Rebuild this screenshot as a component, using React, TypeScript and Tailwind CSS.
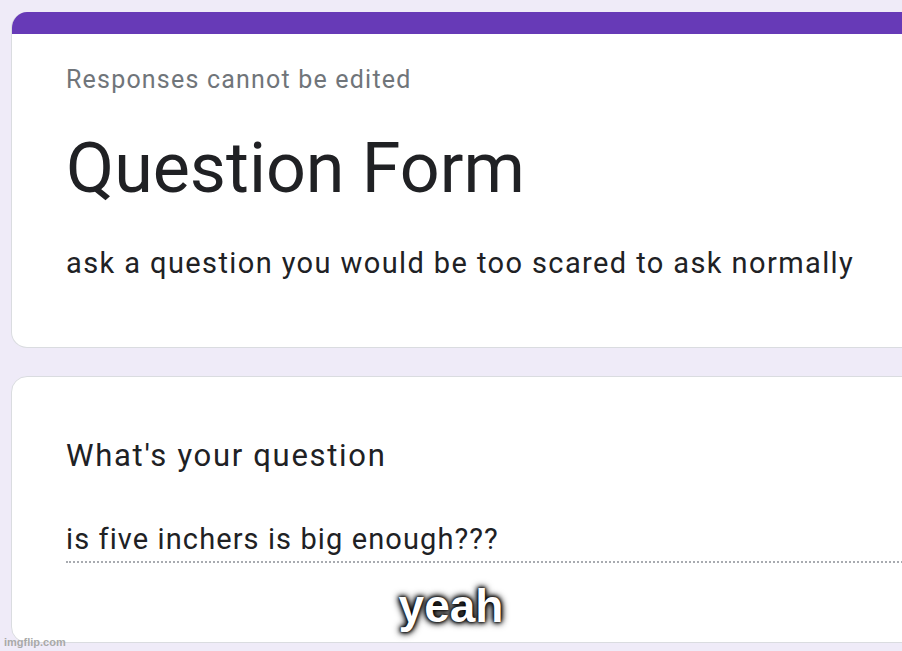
export default function App() {
  return (
    <div className="relative h-[651px] w-[902px] overflow-hidden bg-[#efebf8] font-['Roboto',sans-serif]">
      <div className="flex w-[960px] flex-col gap-[28px] pl-[11px] pt-[12px]">
        <section className="h-[336px] overflow-hidden rounded-[16px] border border-t-0 border-[#dadce0] bg-white">
          <div className="-mx-px h-[22px] bg-[#673ab7]" />
          <div className="pl-[54px] pt-[30px]">
            <p className="text-[25px] leading-[32px] tracking-[1.2px] text-[#70757a]">Responses cannot be edited</p>
            <h1 className="mt-[32px] text-[70px] leading-[80px] text-[#202124]">Question Form</h1>
            <p className="mt-[35px] text-[29px] leading-[40px] tracking-[1.4px] text-[#202124]">
              ask a question you would be too scared to ask normally
            </p>
          </div>
        </section>
        <section className="h-[267px] rounded-[16px] border border-[#dadce0] bg-white">
          <div className="pl-[54px] pt-[59px]">
            <p className="text-[31px] leading-[40px] tracking-[1.7px] text-[#202124]">What&apos;s your question</p>
            <p className="mt-[45px] text-[29px] leading-[36px] tracking-[1.1px] text-[#202124]">is five inchers is big enough???</p>
            <div className="mt-[4px] border-b-2 border-dotted border-[#a8abb0]" />
          </div>
        </section>
      </div>
      <p className="absolute left-0 right-0 top-[580px] text-center font-['Liberation_Sans',Arial,sans-serif] text-[46px] font-bold leading-[52px] text-white [text-shadow:0_0_2px_#000,0_0_4px_#000,0_0_6px_#000,0_0_9px_#000]">
        yeah
      </p>
      <span className="absolute left-[4px] top-[635px] font-['Liberation_Sans',Arial,sans-serif] text-[11px] font-bold leading-[14px] text-[#a9a9a9]">
        imgflip.com
      </span>
    </div>
  )
}
